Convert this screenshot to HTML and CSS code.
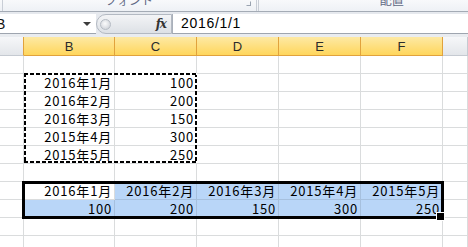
FILE: index.html
```html
<!DOCTYPE html>
<html>
	<head>
		<meta charset="UTF-8">
		<link rel="stylesheet" href="styles.css">
	</head>
	<body>
		<header class="ribbon">
			<div class="group font-group"><span class="label">フォント</span><span class="launcher"></span></div>
			<div class="group align-group"><span class="label">配置</span></div>
		</header>
		<div class="fbar">
			<div class="namebox"><span class="name">B</span><span class="drop"></span></div>
			<div class="groove"><span class="knob"></span><span class="fx">fx</span></div>
			<div class="formula">2016/1/1</div>
		</div>
		<main class="sheet">
			<div class="cells grid">
				<div class="hd"></div><div class="hd sel">B</div><div class="hd sel">C</div><div class="hd sel">D</div><div class="hd sel">E</div><div class="hd sel">F</div><div class="hd"></div>

				<div></div><div></div><div></div><div></div><div></div><div></div><div></div>
				<div></div><div>2016年1月</div><div>100</div><div></div><div></div><div></div><div></div>
				<div></div><div>2016年2月</div><div>200</div><div></div><div></div><div></div><div></div>
				<div></div><div>2016年3月</div><div>150</div><div></div><div></div><div></div><div></div>
				<div></div><div>2015年4月</div><div>300</div><div></div><div></div><div></div><div></div>
				<div></div><div>2015年5月</div><div>250</div><div></div><div></div><div></div><div></div>
				<div></div><div></div><div></div><div></div><div></div><div></div><div></div>
				<div></div><div class="active">2016年1月</div><div class="hl">2016年2月</div><div class="hl">2016年3月</div><div class="hl">2015年4月</div><div class="hl">2015年5月</div><div></div>
				<div></div><div class="hl">100</div><div class="hl">200</div><div class="hl">150</div><div class="hl">300</div><div class="hl">250</div><div></div>
				<div></div><div></div><div></div><div></div><div></div><div></div><div></div>
				<div></div><div></div><div></div><div></div><div></div><div></div><div></div>
			</div>
			<div class="marks grid">
				<div class="marquee"></div>
				<div class="selection"></div>
			</div>
		</main>
	</body>
</html>
```

FILE: styles.css
```css
* {
	box-sizing: border-box;
}
html, body {
	height: 100%;
	margin: 0;
	overflow: hidden;
	padding: 0;
	width: 100%;
}
body {
	background: #fff;
	font-family: "Liberation Sans", "Noto Sans CJK JP", sans-serif;
}

/* ribbon strip, cut at the top */
.ribbon {
	background: linear-gradient(#f8f9fb, #eef1f5);
	border-bottom: 1px solid #a4abb5;
	display: flex;
	height: 12px;
	overflow: hidden;
}
.group {
	display: flex;
	height: 11px;
}
.font-group {
	border-left: 1px solid #c9ced6;
	margin-left: 2px;
	padding-left: 102px;
	width: 255px;
}
.align-group {
	border-left: 3px double #c9ced6;
	padding-left: 121px;
	width: 213px;
}
.label {
	color: #5e6883;
	font-family: "Noto Sans CJK JP", sans-serif;
	font-size: 12px;
	line-height: 12px;
	margin-top: -6px;
}
.launcher {
	border: 1px solid #9aa3b0;
	border-left-color: transparent;
	border-top-color: transparent;
	height: 5px;
	margin: 1px 5px 0 auto;
	width: 5px;
}

/* formula bar */
.fbar {
	background: #e6e9ee;
	border-bottom: 3px solid #e9ecf0;
	display: flex;
	height: 25px;
	padding-top: 2px;
}
.namebox {
	align-items: center;
	background: #fff;
	border-bottom: 1px solid #9ea5af;
	display: flex;
	height: 20px;
	width: 96px;
}
.name {
	color: #111;
	font-size: 14px;
	margin-left: -4px;
}
.drop {
	border-left: 4px solid transparent;
	border-right: 4px solid transparent;
	border-top: 4px solid #3c3c3c;
	margin-left: auto;
	margin-right: 5px;
}
.groove {
	align-items: center;
	background: linear-gradient(#f3f4f6, #dde1e6);
	border: 1px solid #b3b9c2;
	border-radius: 10px 0 0 10px;
	display: flex;
	height: 20px;
	width: 76px;
}
.knob {
	background: radial-gradient(circle at 45% 40%, #fbfbfc, #c6cbd2);
	border: 1px solid #b6bcc4;
	border-radius: 50%;
	height: 11px;
	margin-left: 3px;
	width: 11px;
}
.fx {
	color: #333;
	font-family: "DejaVu Serif", serif;
	font-size: 12px;
	font-style: italic;
	font-weight: bold;
	letter-spacing: -1px;
	margin-left: auto;
	margin-right: 5px;
}
.formula {
	background: #fff;
	border-bottom: 1px solid #9ea5af;
	border-left: 1px solid #a9b0ba;
	flex: 1;
	font-size: 14px;
	height: 20px;
	letter-spacing: 0.7px;
	line-height: 19px;
	padding-left: 8px;
}

/* sheet: cell grid with a second grid of marks stacked on it */
.sheet {
	display: grid;
}
.grid {
	display: grid;
	grid-area: 1 / 1;
	grid-template-columns: 24px 91px 82px 82px 82px 82px 1fr;
	grid-template-rows: 19px repeat(11, 18px);
}
.cells > div {
	border-bottom: 1px solid #dadcdd;
	border-right: 1px solid #dadcdd;
	color: #000;
	font-family: "Noto Sans CJK JP", sans-serif;
	font-size: 13px;
	letter-spacing: 0.8px;
	line-height: 17px;
	overflow: hidden;
	padding-right: 2px;
	text-align: right;
	white-space: nowrap;
}
.cells > div.hd {
	align-items: flex-end;
	background: linear-gradient(#f6f7f9, #e3e6ea);
	border-bottom: 1px solid #c5cad1;
	border-right: 1px solid #c5cad1;
	color: #2b2b2b;
	display: flex;
	font-family: "Liberation Sans", sans-serif;
	font-size: 13px;
	justify-content: center;
	letter-spacing: 0;
	line-height: 15px;
	padding: 0 0 1px;
}
.cells > div.hd:first-child {
	border-right-color: #e1a23c;
}
.cells > div.sel {
	background: linear-gradient(#fde9a4, #ffd65c);
	border-bottom-color: #e1a23c;
	border-right-color: #e1a23c;
}
.cells > div.hl {
	background: #b9d6f8;
	border-color: #a6c0de;
}
.cells > div.active {
	background: #fff;
}

/* copy marquee around B2:C6 */
.marquee {
	background:
		repeating-linear-gradient(90deg, #000 0 4px, #fff 4px 6px) top / 100% 2px no-repeat,
		repeating-linear-gradient(90deg, #000 0 4px, #fff 4px 6px) bottom / 100% 2px no-repeat,
		repeating-linear-gradient(180deg, #000 0 4px, #fff 4px 6px) left / 2px 100% no-repeat,
		repeating-linear-gradient(180deg, #000 0 4px, #fff 4px 6px) right / 2px 100% no-repeat;
	grid-column: 2 / 4;
	grid-row: 3 / 8;
	margin: -1px 0 1px;
}

/* selected range B8:F9 */
.selection {
	border: 3px solid #000;
	grid-column: 2 / 7;
	grid-row: 9 / 11;
	margin: -1px -1px -1px -2px;
	position: relative;
}
.selection::after {
	background: #000;
	border: 1px solid #fff;
	bottom: -5px;
	content: "";
	height: 7px;
	position: absolute;
	right: -4px;
	width: 7px;
}
```
